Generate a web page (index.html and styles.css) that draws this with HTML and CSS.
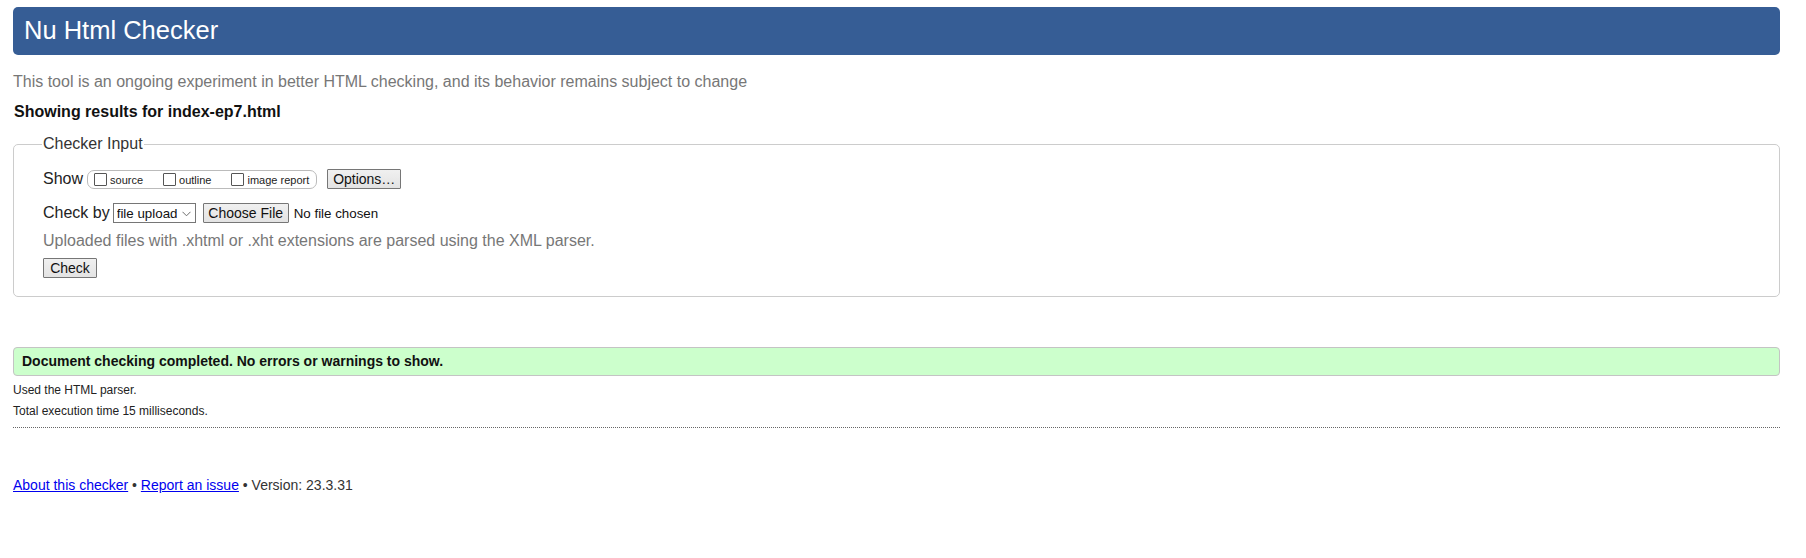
FILE: index.html
```html
<!DOCTYPE html>
<html lang="en">
<head>
<meta charset="utf-8">
<title>Showing results for index-ep7.html - Nu Html Checker</title>
<link rel="stylesheet" href="styles.css">
</head>
<body>
<div class="page">
  <header class="masthead">
    <h1 class="masthead-title">Nu Html Checker</h1>
  </header>
  <p class="intro">This tool is an ongoing experiment in better HTML checking, and its behavior remains subject to change</p>
  <h2 class="results-title">Showing results for index-ep7.html</h2>

  <form class="checker-form">
    <fieldset class="checker-input">
      <legend class="checker-legend">Checker Input</legend>

      <div class="form-row show-row">
        <span class="row-label">Show</span>
        <div class="show-group">
          <label class="show-item"><input type="checkbox" class="box"><span class="show-text">source</span></label>
          <label class="show-item"><input type="checkbox" class="box"><span class="show-text">outline</span></label>
          <label class="show-item"><input type="checkbox" class="box"><span class="show-text">image report</span></label>
        </div>
        <button type="button" class="btn btn-options">Options…</button>
      </div>

      <div class="form-row check-row">
        <span class="row-label">Check by</span>
        <span class="select-wrap">
          <select class="select"><option>file upload</option></select>
          <svg class="chevron" width="9" height="6" viewBox="0 0 9 6"><path d="M0.5 0.8 L4.5 4.8 L8.5 0.8" fill="none" stroke="#6d6d6d" stroke-width="1"/></svg>
        </span>
        <button type="button" class="btn btn-file">Choose File</button>
        <span class="file-status">No file chosen</span>
      </div>

      <p class="upload-note">Uploaded files with .xhtml or .xht extensions are parsed using the XML parser.</p>

      <button type="button" class="btn btn-check">Check</button>
    </fieldset>
  </form>

  <p class="success">Document checking completed. No errors or warnings to show.</p>
  <p class="details details-first">Used the HTML parser.</p>
  <p class="details">Total execution time 15 milliseconds.</p>
  <div class="rule"></div>

  <footer class="footer">
    <a href="#" class="footer-link">About this checker</a> • <a href="#" class="footer-link">Report an issue</a> • Version: 23.3.31
  </footer>
</div>
</body>
</html>
```
FILE: styles.css
```css
html, body {
  margin: 0;
  padding: 0;
  background: #ffffff;
}

.page {
  padding: 7px 26px 40px 13px;
  font-family: "Liberation Sans", Arial, sans-serif;
  color: #222;
}

.masthead {
  height: 48px;
  box-sizing: border-box;
  background: #365d95;
  border-radius: 5px;
  padding: 0 11px 2px 11px;
  display: flex;
  align-items: center;
}

.masthead-title {
  margin: 0;
  font-size: 25.5px;
  font-weight: normal;
  line-height: 26px;
  color: #ffffff;
}

.intro {
  margin: 17px 0 0 0;
  font-size: 16px;
  line-height: 20px;
  color: #777777;
}

.results-title {
  margin: 11px 0 0 1px;
  font-size: 16px;
  line-height: 18px;
  font-weight: bold;
  color: #111;
}

.checker-form {
  margin: 14px 0 0 0;
}

.checker-input {
  margin: 0;
  border: 1px solid #cccccc;
  border-radius: 5px;
  padding: 16px 16px 18px 28px;
  min-width: 0;
}

.checker-legend {
  padding: 0 1px;
  font-size: 16px;
  color: #333;
}

.form-row {
  display: flex;
  align-items: center;
  height: 20px;
}

.row-label {
  font-size: 16px;
  color: #222;
  margin-left: 1px;
}

.show-row .row-label {
  margin-right: 4px;
}

.show-group {
  display: flex;
  align-items: center;
  height: 19px;
  box-sizing: border-box;
  border: 1px solid #bbbbbb;
  border-radius: 7px;
  padding: 0 7px 0 6px;
  gap: 20px;
}

.show-item {
  display: flex;
  align-items: center;
  gap: 3px;
}

.box {
  appearance: none;
  -webkit-appearance: none;
  width: 13px;
  height: 13px;
  margin: 0;
  box-sizing: border-box;
  border: 1px solid #555555;
  border-radius: 1px;
  background: #fff;
}

.show-text {
  font-size: 11px;
  line-height: 13px;
  padding-top: 2px;
  color: #222;
}

.btn {
  font-family: "Liberation Sans", Arial, sans-serif;
  font-size: 13.33px;
  color: #111;
  height: 20px;
  box-sizing: border-box;
  border: 1px solid #767676;
  border-radius: 1px;
  background: linear-gradient(#f0f0f0, #e3e3e3);
  padding: 0 6px;
  margin: 0;
  line-height: 18px;
}

.btn-options {
  margin-left: 10px;
  width: 74px;
  padding: 0;
  font-size: 14px;
}

.check-row {
  margin-top: 14px;
}

.check-row .row-label {
  margin-right: 3px;
}

.select-wrap {
  position: relative;
  display: inline-flex;
}

.select {
  appearance: none;
  -webkit-appearance: none;
  width: 83px;
  height: 20px;
  box-sizing: border-box;
  border: 1px solid #767676;
  border-radius: 0;
  background: #fff;
  font-family: "Liberation Sans", Arial, sans-serif;
  font-size: 13.33px;
  color: #111;
  padding: 0 0 0 3px;
  margin: 0;
}

.chevron {
  position: absolute;
  right: 5px;
  top: 8px;
  pointer-events: none;
}

.btn-file {
  margin-left: 7px;
  width: 86px;
  padding: 0;
  font-size: 14px;
}

.file-status {
  margin-left: 5px;
  font-size: 13.33px;
  color: #111;
}

.upload-note {
  margin: 8px 0 0 1px;
  font-size: 16px;
  line-height: 20px;
  color: #777777;
}

.btn-check {
  display: block;
  margin-top: 7px;
  margin-left: 1px;
  width: 54px;
  padding: 0;
  font-size: 14px;
}

.success {
  margin: 50px 0 0 0;
  height: 29px;
  box-sizing: border-box;
  background: #ccffcc;
  border: 1px solid #c4c4c4;
  border-radius: 4px;
  padding: 0 8px;
  font-size: 14px;
  line-height: 27px;
  font-weight: bold;
  color: #111;
}

.details {
  margin: 8px 0 0 0;
  font-size: 12px;
  line-height: 13px;
  color: #222;
}

.details-first {
  margin-top: 8px;
}

.rule {
  margin-top: 9px;
  border-top: 1px dotted #666666;
}

.footer {
  margin-top: 49px;
  font-size: 14px;
  line-height: 16px;
  color: #333;
}

.footer-link {
  color: #0000ee;
}
```
